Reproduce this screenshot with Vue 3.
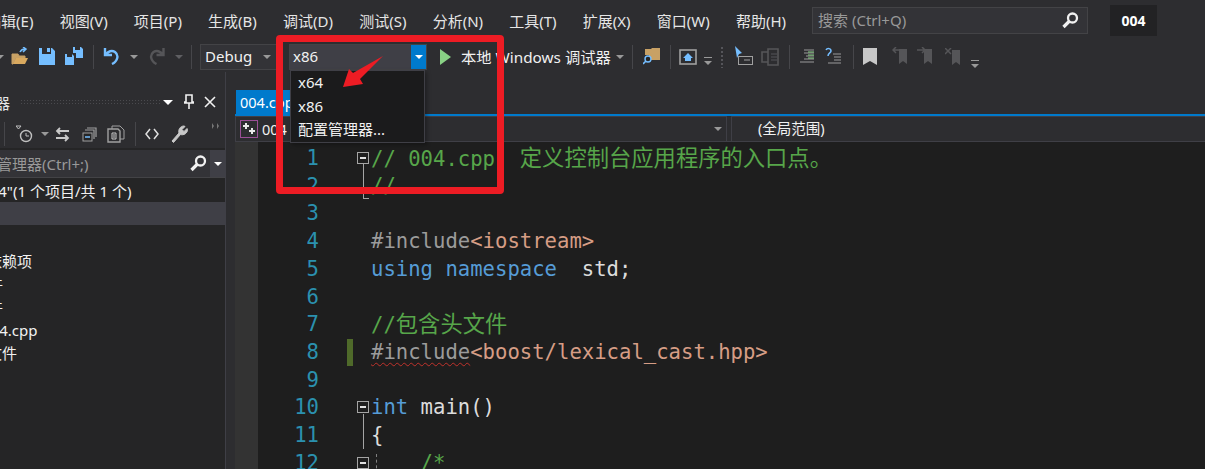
<script setup>
const menus = ['编辑(E)','视图(V)','项目(P)','生成(B)','调试(D)','测试(S)','分析(N)','工具(T)','扩展(X)','窗口(W)','帮助(H)']
const rows = [
  { cls: 'r1', text: '"004"(1 个项目/共 1 个)' },
  { cls: 'sel', text: '' },
  { cls: '', text: '' },
  { cls: 'r3', text: '外部依赖项' },
  { cls: 'r4', text: '头文件' },
  { cls: 'r4', text: '源文件' },
  { cls: 'r5', text: '004.cpp' },
  { cls: 'r6', text: '资源文件' },
]
const firstComment = '// 004.cpp  '
const usingTail = '  std;'
const indent = '    '
</script>

<template>
  <div class="ide">
    <header class="menubar">
      <nav class="menus"><span v-for="m in menus" :key="m">{{ m }}</span></nav>
      <div class="search">
        <span class="stext">搜索 (Ctrl+Q)</span>
        <svg width="17" height="17" viewBox="0 0 17 17"><circle cx="10.5" cy="6" r="4.5" fill="none" stroke="#f1f1f1" stroke-width="2.300"/><path d="M7.5 9 1.500 15" stroke="#f1f1f1" stroke-width="3.200"/></svg>
      </div>
      <div class="badge">004</div>
    </header>

    <div class="toolbar">
      <span class="caret c-first"></span>
      <svg class="open" width="18" height="18" viewBox="0 0 18 18"><path d="M1 7h6l1 2h6v2H5l-3 6H1z" fill="#c8a165" stroke="#c8a165"/><path d="M5 11h12l-3 6H2z" fill="#d9a95f"/><path d="M9 5c1-2 3-3 5-3M12 0l3 2-3 3" fill="none" stroke="#75beff" stroke-width="1.5"/></svg>
      <svg class="save" width="16" height="17" viewBox="0 0 16 17"><path d="M0 0h3v6h9V0h1l3 3v14H0z" fill="#75beff"/><path d="M8 0h3v4H8z" fill="#75beff"/></svg>
      <svg class="saveall" width="18" height="18" viewBox="0 0 18 18"><path d="M0 7h2v3h5V7l2 2v9H0z" fill="#75beff"/><path d="M8 0h2v3h5V0h1l2 2v9h-7V6H8z" fill="#75beff"/></svg>
      <i class="sep s1"></i>
      <svg class="undo" width="17" height="18" viewBox="0 0 17 18"><path d="M2 1v7h7M2.5 8C5 4 9 3 12 5c4 3 3 9-3 12" fill="none" stroke="#75beff" stroke-width="2.4"/></svg>
      <span class="caret c-undo"></span>
      <svg class="redo" width="18" height="18" viewBox="0 0 17 18"><path d="M15 1v7H8M14.5 8C12 4 8 3 5 5c-4 3-3 9 3 12" fill="none" stroke="#555558" stroke-width="2.4"/></svg>
      <span class="caret c-redo dim"></span>
      <i class="sep s2"></i>
      <div class="combo debug"><span class="ctext">Debug</span><span class="caret"></span></div>
      <div class="combo plat"><span class="ctext">x86</span><b class="blue"><span class="caret white"></span></b></div>
      <svg class="play" width="11" height="16" viewBox="0 0 11 16"><path d="M0 0l11 8-11 8z" fill="#89d185"/></svg>
      <span class="run">本地 Windows 调试器</span>
      <span class="caret c-run"></span>
      <i class="sep s3"></i>
      <svg class="findf" width="18" height="19" viewBox="0 0 18 19"><path d="M2 3h6l1-1h8v12H6V9H2z" fill="#c8a165"/><circle cx="5" cy="13" r="3" fill="#252526" stroke="#75beff" stroke-width="1.4"/><path d="M3 15 0 18" stroke="#75beff" stroke-width="1.6"/></svg>
      <i class="sep s4"></i>
      <svg class="home" width="18" height="16" viewBox="0 0 18 16"><rect x="1" y="1" width="16" height="14" fill="none" stroke="#a0a0a0" stroke-width="1.6"/><path d="M9 4 4 9h2v3h6V9h2z" fill="#75beff"/></svg>
      <span class="over o1"></span>
      <i class="grip"></i>
      <svg class="pick" width="18" height="20" viewBox="0 0 18 20"><path d="M0 0l7 7-3 1-2 4z" fill="#75beff"/><rect x="3.500" y="10.500" width="14" height="8" fill="none" stroke="#a0a0a0"/><path d="M9 14h6" stroke="#a0a0a0"/></svg>
      <svg class="dock" width="18" height="18" viewBox="0 0 18 18"><path d="M7 1h10v16H7zM1 4h6v10H1z" fill="none" stroke="#555558" stroke-width="1.6"/><path d="M10 6h6M10 9h6M10 12h6" stroke="#555558"/></svg>
      <i class="sep s5"></i>
      <svg class="ind" width="14" height="14" viewBox="0 0 14 14"><path d="M4 1h10M4 4h10M6 7h8M4 10h10M0 13h14" stroke="#9a9a9a"/><path d="M8 3h6M8 6h6M8 9h6" stroke="#89d185"/></svg>
      <svg class="ind2" width="16" height="18" viewBox="0 0 16 18"><path d="M1 3c1-2 5-2 5 1 0 2-3 2-3 5" fill="none" stroke="#75beff" stroke-width="1.5"/><path d="M8 7h8M9 10h7M9 13h7M3 16h13" stroke="#9a9a9a"/></svg>
      <i class="sep s6"></i>
      <svg class="bm" width="14" height="17" viewBox="0 0 14 17"><path d="M0 0h14v17l-7-4-7 4z" fill="#c8c8c8"/></svg>
      <svg class="bm2" width="15" height="17" viewBox="0 0 15 17"><path d="M7 2h8v15l-4-3-4 3z" fill="#555558"/><path d="M8 3H2M4 0 1 3l3 3" fill="none" stroke="#555558" stroke-width="1.5"/></svg>
      <svg class="bm3" width="15" height="17" viewBox="0 0 15 17"><path d="M7 2h8v15l-4-3-4 3z" fill="#555558"/><path d="M0 3h7M5 0l3 3-3 3" fill="none" stroke="#555558" stroke-width="1.5"/></svg>
      <svg class="bm4" width="15" height="17" viewBox="0 0 15 17"><path d="M7 2h8v15l-4-3-4 3z" fill="#555558"/><path d="M0 0l6 6M6 0 0 6" stroke="#555558" stroke-width="1.5"/></svg>
      <span class="over o2"></span>
    </div>

    <div class="dock-area">
      <aside class="panel">
        <div class="ptitle">
          <span class="ptext">资源管理器</span>
          <i class="dots"></i>
          <span class="caret white ct"></span>
          <svg class="pin" width="10" height="16" viewBox="0 0 10 16"><path d="M2 1h6v7h2v1H0V8h2zM5 9v6" fill="none" stroke="#f1f1f1" stroke-width="1.6"/></svg>
          <svg class="close" width="12" height="12" viewBox="0 0 12 12"><path d="M1 1l10 10M11 1 1 11" stroke="#f1f1f1" stroke-width="1.6"/></svg>
        </div>
        <div class="ptools">
          <i class="sep ps1"></i>
          <svg class="p-clock" width="17" height="18" viewBox="0 0 17 18"><circle cx="10" cy="11" r="5.500" fill="none" stroke="#c0c0c0" stroke-width="1.400"/><path d="M10 8v3h3M0 1h5L2.500 4z" fill="none" stroke="#c0c0c0"/></svg>
          <span class="caret p-c"></span>
          <svg class="p-sync" width="15" height="15" viewBox="0 0 15 15"><path d="M14 4H2M5 1 2 4l3 3M1 11h12M10 8l3 3-3 3" fill="none" stroke="#c8c8c8" stroke-width="1.800"/></svg>
          <svg class="p-copy" width="15" height="15" viewBox="0 0 15 15"><path d="M5 1h9v9M3 3h9v9" fill="none" stroke="#a0a0a0" stroke-width="1.200"/><rect x="1" y="6" width="9" height="8" fill="#252526" stroke="#a0a0a0"/><path d="M3 10h5" stroke="#75beff" stroke-width="1.500"/></svg>
          <svg class="p-page" width="18" height="18" viewBox="0 0 18 18"><path d="M5 4V1h8l4 4v9h-4" fill="none" stroke="#a0a0a0"/><path d="M1 4h10l2 2v11H1z" fill="none" stroke="#a0a0a0" stroke-width="1.400"/><path d="M5 8h4v6H5zM6 10h2M6 12h2" fill="none" stroke="#c8c8c8"/></svg>
          <i class="sep ps2"></i>
          <svg class="p-code" width="14" height="12" viewBox="0 0 14 12"><path d="M5 1 1 6l4 5M9 1l4 5-4 5" fill="none" stroke="#e0e0e0" stroke-width="1.500"/></svg>
          <svg class="p-wrench" width="18" height="18" viewBox="0 0 18 18"><path d="M2 16 9 8c-1-3 1-7 5-7l1 .5-3 3 2 2 3-3 .5 1c0 4-4 6-7 5l-7 8z" fill="#c8c8c8" stroke="#c8c8c8"/></svg>
          <svg class="p-more" width="7" height="6" viewBox="0 0 7 6"><path d="M0 0l2 3-2 3zM5 0l2 3-2 3z" fill="#777"/></svg>
        </div>
        <div class="psearch">
          <span class="pstext">资源管理器(Ctrl+;)</span>
          <svg class="psicon" width="17" height="17" viewBox="0 0 17 17"><circle cx="10.500" cy="6" r="4.500" fill="none" stroke="#f1f1f1" stroke-width="2.300"/><path d="M7.500 9 1.500 15" stroke="#f1f1f1" stroke-width="3.200"/></svg>
          <b class="psdrop"><span class="caret white"></span></b>
        </div>
        <ul class="tree">
          <li v-for="(r, i) in rows" :key="i" :class="r.cls"><span>{{ r.text }}</span></li>
        </ul>
      </aside>
      <div class="gap"></div>
      <main class="doc">
        <div class="tabs"><div class="tab">004.cpp</div></div>
        <div class="nav">
          <div class="nav1">
            <svg width="18" height="18" viewBox="0 0 18 18"><rect x="0.500" y="0.500" width="17" height="17" fill="#2d2d30" stroke="#9b4f96"/><path d="M6 3v6M3 6h6M12 8v6M9 11h6" stroke="#e8e8e8" stroke-width="2"/></svg>
            <span class="nt">004</span>
            <span class="caret"></span>
          </div>
          <div class="nav2"><span class="nav2t">(全局范围)</span></div>
        </div>
        <div class="editor">
          <div class="margin"></div>
          <div class="lines">
            <div class="ln"><span class="n">1</span><span class="g"><i class="fold"></i><i class="v v1"></i></span><code class="cm">{{ firstComment }}<span class="zh">定义控制台应用程序的入口点。</span></code></div>
            <div class="ln"><span class="n">2</span><span class="g"><i class="v v2"></i><i class="end"></i></span><code class="cm">//</code></div>
            <div class="ln"><span class="n">3</span><span class="g"></span><code></code></div>
            <div class="ln"><span class="n">4</span><span class="g"></span><code><span class="pp">#include</span><span class="st">&lt;iostream&gt;</span></code></div>
            <div class="ln"><span class="n">5</span><span class="g"></span><code><span class="kw">using namespace</span>{{ usingTail }}</code></div>
            <div class="ln"><span class="n">6</span><span class="g"></span><code></code></div>
            <div class="ln"><span class="n">7</span><span class="g"></span><code class="cm">//<span class="zh">包含头文件</span></code></div>
            <div class="ln"><span class="n">8</span><span class="g"><i class="chg"></i></span><code><span class="pp err">#include</span><span class="st">&lt;boost/lexical_cast.hpp&gt;</span></code></div>
            <div class="ln"><span class="n">9</span><span class="g"></span><code></code></div>
            <div class="ln"><span class="n">10</span><span class="g"><i class="fold"></i></span><code><span class="kw">int</span> main()</code></div>
            <div class="ln"><span class="n">11</span><span class="g"><i class="v v3"></i></span><code>{</code></div>
            <div class="ln"><span class="n">12</span><span class="g"><i class="fold"></i></span><code><i class="guide"></i>{{ indent }}<span class="cm">/*</span></code></div>
          </div>
        </div>
      </main>
    </div>

    <div class="dropdown">
      <div>x64</div>
      <div>x86</div>
      <div>配置管理器...</div>
    </div>
    <div class="redbox"></div>
    <svg class="arrow" width="44" height="34" viewBox="0 0 44 34"><path d="M1 32 7 14 11 18 41 1 18 24 21 29z" fill="#ed1c24"/></svg>
  </div>
</template>

<style>
html, body { margin: 0; background: #2d2d30; overflow: hidden; }
</style>

<style scoped>
.ide { position: relative; width: 1205px; height: 469px; overflow: hidden; background: #2d2d30; color: #f1f1f1; font: 15px "Noto Sans", "Noto Sans CJK SC", sans-serif; }
.menubar { height: 42px; padding-bottom: 2px; box-sizing: border-box; display: flex; align-items: center; }
.menus { display: flex; margin-left: -27px; width: 839px; flex: none; font-size: 15px; color: #e6e6e6; }
.menus span { padding: 0 13.100px; white-space: nowrap; flex: none; }
.search { width: 261px; height: 25px; display: flex; align-items: center; justify-content: space-between; padding: 0 8px 0 5px; background: #333337; border: 1px solid #434346; color: #999; font-size: 15px; flex: none; }
.stext { margin-top: -2px; }
.badge { margin-left: 22px; width: 47px; height: 31px; background: #222224; display: flex; align-items: center; justify-content: center; font-weight: 700; font-size: 14px; color: #fff; flex: none; }

.toolbar { height: 30px; display: flex; align-items: center; }
.toolbar > * { flex: none; }
.caret { display: inline-block; width: 0; height: 0; border: 4px solid transparent; border-top-color: #999; border-bottom: 0; flex: none; }
.caret.white { border-top-color: #fff; }
.caret.dim { border-top-color: #5f5f62; }
.sep { display: block; width: 1px; height: 24px; background: #46464a; flex: none; }
.c-first { margin-left: -4px; }
.open { margin-left: 7px; margin-top: -2px; }
.save { margin-left: 10px; margin-top: -2px; }
.saveall { margin-left: 10px; margin-top: -2px; }
.s1 { margin-left: 10px; }
.undo { margin-left: 9px; margin-top: -3px; }
.c-undo { margin-left: 10px; }
.redo { margin-left: 10px; margin-top: -3px; }
.c-redo { margin-left: 9px; }
.s2 { margin-left: 8px; }
.combo { display: flex; align-items: center; box-sizing: border-box; height: 26px; border: 1px solid #434346; background: #333337; }
.ctext { margin-top: -2px; }
.debug { width: 78px; margin-left: 8px; padding: 0 6px 0 4px; justify-content: space-between; color: #f1f1f1; }
.plat { width: 138px; margin-left: 11px; background: #3f3f46; padding-left: 3px; justify-content: space-between; }
.blue { width: 15px; align-self: stretch; background: #007acc; display: flex; align-items: center; justify-content: center; }
.play { margin-left: 13px; margin-top: -1px; }
.run { margin-left: 10px; white-space: nowrap; width: 150px; font-size: 15.300px; margin-top: -3px; }
.c-run { margin-left: 5px; }
.s3 { margin-left: 8px; }
.findf { margin-left: 10px; margin-top: -3px; }
.s4 { margin-left: 9px; }
.home { margin-left: 8px; }
.over { display: block; width: 8px; height: 8px; border-top: 1px solid #999; position: relative; }
.over::after { content: ""; position: absolute; left: 0; top: 3px; border: 4px solid transparent; border-top-color: #999; border-bottom: 0; }
.o1 { margin-left: 7px; margin-top: 9px; }
.grip { display: block; width: 4px; height: 22px; margin-left: 8px; background: radial-gradient(circle, #55555a 1px, transparent 1.200px) 0 0 / 4px 4px; }
.pick { margin-left: 11px; margin-top: -3px; }
.dock { margin-left: 8px; }
.s5 { margin-left: 10px; }
.ind { margin-left: 10px; margin-top: -3px; }
.ind2 { margin-left: 11px; margin-top: -3px; }
.s6 { margin-left: 12px; }
.bm { margin-left: 9px; margin-top: -1px; }
.bm2 { margin-left: 15px; margin-top: -3px; }
.bm3 { margin-left: 10px; margin-top: -3px; }
.bm4 { margin-left: 13px; margin-top: -1px; }
.o2 { margin-left: 11px; margin-top: 14px; }

.dock-area { display: flex; height: 397px; }
.panel { width: 225px; flex: none; background: #252526; border-right: 1px solid #3f3f46; overflow: hidden; }
.ptitle { height: 48px; background: #2d2d30; display: flex; align-items: center; padding-top: 12px; box-sizing: border-box; font-size: 15px; color: #e6e6e6; }
.ptext { margin-left: -65px; width: 75px; flex: none; white-space: nowrap; }
.dots { display: block; width: 140px; height: 6px; margin-left: 10px; flex: none; background: radial-gradient(circle, #4a4a4e 0.800px, transparent 1px) 0 0 / 3px 3px; }
.ct { margin-left: 3px; border-width: 5px; border-bottom: 0; }
.pin { margin-left: 11px; }
.close { margin-left: 10px; }
.ptools { height: 28px; display: flex; align-items: center; background: #2d2d30; }
.ptools > * { flex: none; }
.ps1 { margin-left: 4px; }
.p-clock { margin-left: 11px; }
.p-c { margin-left: 8px; }
.p-sync { margin-left: 6px; }
.p-copy { margin-left: 12px; }
.p-page { margin-left: 10px; }
.ps2 { margin-left: 10px; }
.p-code { margin-left: 9px; }
.p-wrench { margin-left: 11px; }
.p-more { margin-left: 24px; margin-top: -16px; }
.psearch { height: 28px; display: flex; align-items: center; background: #333337; border-bottom: 1px solid #434346; box-sizing: border-box; margin-top: 2px; color: #999; font-size: 15px; }
.pstext { margin-left: -33px; width: 223px; flex: none; white-space: nowrap; }
.psicon { flex: none; }
.psdrop { width: 15px; height: 27px; display: flex; align-items: center; justify-content: center; background: #3f3f46; flex: none; margin-left: 3px; }
.tree { list-style: none; margin: 1px 0 0; padding: 0; font-size: 15px; color: #f1f1f1; }
.tree li { height: 23.200px; display: flex; align-items: center; white-space: nowrap; }
.tree li span { flex: none; }
.r1 span { margin-left: -25px; }
.sel { background: #3f3f46; }
.r3 span { margin-left: -43px; }
.r4 span { margin-left: -42px; }
.r5 span { margin-left: -18px; }
.r6 span { margin-left: -43px; }
.gap { width: 9px; flex: none; background: #2d2d30; }
.doc { flex: 1; min-width: 0; display: flex; flex-direction: column; }
.tabs { height: 44px; padding: 18px 0 0 1px; box-sizing: border-box; border-bottom: 2px solid #007acc; flex: none; }
.tab { width: 60px; height: 24px; background: #007acc; color: #fff; font-size: 14.500px; padding-left: 4px; box-sizing: border-box; line-height: 24px; white-space: nowrap; overflow: hidden; }
.nav { height: 25px; display: flex; font-size: 14.500px; gap: 4px; border-bottom: 1px solid #3f3f46; flex: none; }
.nav1 { width: 492px; flex: none; box-sizing: border-box; display: flex; align-items: center; padding: 0 4px; border: 1px solid #3f3f46; border-width: 1px 1px 0 1px; }
.nav1 .nt { margin-left: 4px; flex: 1; }
.nav2 { flex: 1; display: flex; align-items: center; padding-left: 26px; border: 1px solid #3f3f46; border-width: 1px 0 0 1px; }
.nav2t { margin-top: -3px; }
.editor { flex: 1; display: flex; background: #1e1e1e; min-height: 0; }
.margin { width: 23px; flex: none; background: #333333; }
.lines { flex: 1; padding-top: 3px; }
.ln { height: 27.730px; display: flex; font: 20.600px/27.730px "DejaVu Sans Mono", monospace; }
.n { width: 61px; text-align: right; color: #2b91af; flex: none; }
.g { width: 52px; flex: none; position: relative; }
.ln code { font: inherit; white-space: pre; color: #dcdcdc; position: relative; }
.cm, .ln code.cm { color: #57a64a; }
.zh { font: 22.300px/1 "Noto Sans CJK SC", sans-serif; }
.pp { color: #9b9b9b; }
.st { color: #d69d85; }
.kw { color: #569cd6; }
.err { text-decoration: underline wavy #c0322b 1px; text-underline-offset: 3px; }
.fold { position: absolute; left: 38px; top: 7px; width: 12px; height: 12px; box-sizing: border-box; border: 1px solid #a5a5a5; }
.fold::after { content: ""; position: absolute; left: 2px; right: 2px; top: 4px; height: 2px; background: #e0e0e0; }
.v { position: absolute; left: 44px; width: 1px; background: #a5a5a5; }
.v1 { top: 19px; height: 9px; }
.v2 { top: 0; height: 25px; }
.end { position: absolute; left: 44px; top: 25px; width: 6px; height: 1px; background: #a5a5a5; }
.v3 { top: -8px; height: 35px; }
.chg { position: absolute; left: 28px; top: 0; width: 6px; height: 27px; background: #4f6a2a; }
.guide { position: absolute; left: 5px; top: 4px; width: 0; height: 20px; border-left: 1px dashed #808080; }
.dropdown { position: absolute; left: 290px; top: 70px; width: 135px; height: 73px; box-sizing: border-box; background: #1b1b1c; border: 1px solid #3f3f46; padding: 0 0 0 7px; color: #f1f1f1; box-shadow: 2px 2px 4px rgba(0, 0, 0, 0.300); }
.dropdown div { height: 23.500px; line-height: 23.500px; white-space: nowrap; }
.redbox { position: absolute; left: 276px; top: 35px; width: 228px; height: 159px; box-sizing: border-box; border: 7px solid #ed1c24; border-radius: 4px; }
.arrow { position: absolute; left: 342px; top: 55px; }
</style>
